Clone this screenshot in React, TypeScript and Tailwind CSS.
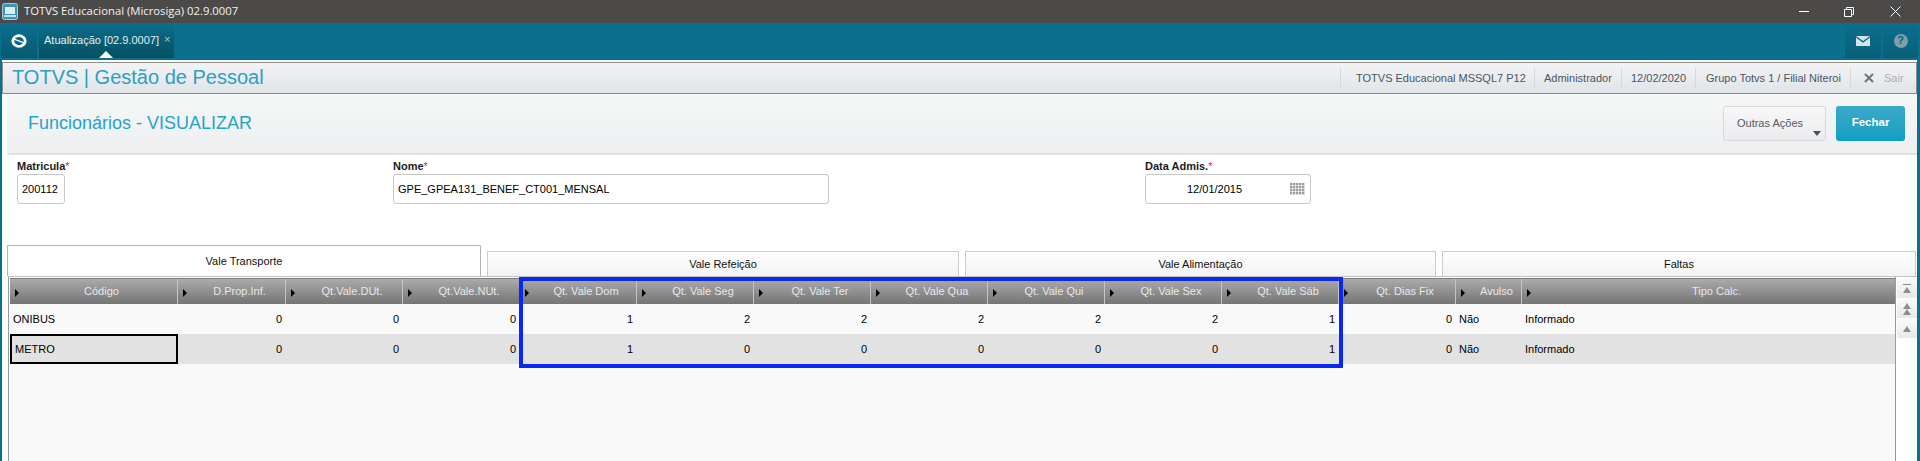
const columns = [
  { label: "Código", width: "w-[168px]" },
  { label: "D.Prop.Inf.", width: "w-[108px]" },
  { label: "Qt.Vale.DUt.", width: "w-[117px]" },
  { label: "Qt.Vale.NUt.", width: "w-[117px]" },
  { label: "Qt. Vale Dom", width: "w-[117px]" },
  { label: "Qt. Vale Seg", width: "w-[117px]" },
  { label: "Qt. Vale Ter", width: "w-[117px]" },
  { label: "Qt. Vale Qua", width: "w-[117px]" },
  { label: "Qt. Vale Qui", width: "w-[117px]" },
  { label: "Qt. Vale Sex", width: "w-[117px]" },
  { label: "Qt. Vale Sáb", width: "w-[117px]" },
  { label: "Qt. Dias Fix", width: "w-[117px]" },
  { label: "Avulso", width: "w-[66px]" },
  { label: "Tipo Calc.", width: "flex-1" },
];

const rows = [
  { name: "ONIBUS", values: [0, 0, 0, 1, 2, 2, 2, 2, 2, 1, 0], bg: "bg-[#f9f9f9]", selected: false },
  { name: "METRO", values: [0, 0, 0, 1, 0, 0, 0, 0, 0, 1, 0], bg: "bg-[#e2e2e2]", selected: true },
];

function UpArrow() {
  return <div className="h-0 w-0 border-x-[4px] border-b-[6px] border-x-transparent border-b-[#8e8e8e]" />;
}

function TitleBar() {
  return (
    <div className="flex h-[23px] items-center bg-[#4c4a48] text-[#f1f1f1]">
      <svg viewBox="0 0 16 17" className="ml-[2px] h-[17px] w-[16px]">
        <rect x="0.5" y="0.5" width="15" height="16" rx="2" fill="#3a96b8" stroke="#a5ccdb" />
        <rect x="3" y="4" width="10" height="7" fill="#dcebf1" />
        <rect x="2" y="12" width="12" height="2" fill="#c3dbe5" />
      </svg>
      <span className="ml-[6px] font-['Open_Sans',sans-serif] text-[11.3px]">TOTVS Educacional (Microsiga) 02.9.0007</span>
      <div className="ml-auto flex items-center">
        <div className="h-px w-[10px] bg-white" />
        <svg viewBox="0 0 10 10" className="ml-[35px] h-[10px] w-[10px]" fill="none" stroke="white">
          <path d="M2.5 2.5V.5h7v7h-2M.5 2.5h7v7h-7z" />
        </svg>
        <svg viewBox="0 0 11 11" className="ml-[36px] mr-[19px] h-[11px] w-[11px]" fill="none" stroke="white">
          <path d="M.5.5l10 10M10.5.5l-10 10" />
        </svg>
      </div>
    </div>
  );
}

function TabBar() {
  return (
    <div className="flex h-[37px] items-start bg-[#0b6f8e] pl-px">
      <div className="flex h-[35px] w-[36px] items-center justify-center bg-gradient-to-b from-[#0b6f8e] to-[#075a72]">
        <svg viewBox="0 0 16 14" className="h-[14px] w-[16px]" fill="none">
          <ellipse cx="8" cy="7" rx="6.2" ry="5.4" stroke="white" strokeWidth="2.8" />
          <path d="M3 5.2 13 8.8" stroke="white" strokeWidth="1.4" />
        </svg>
      </div>
      <div className="relative ml-[2px] flex h-[35px] w-[135px] items-center bg-gradient-to-b from-[#0b6f8e] to-[#04505f] pb-[1px] pl-[5px] text-[11px] text-[#e6eef1]">
        Atualização [02.9.0007]
        <span className="ml-[5px] -translate-y-[1px] text-[11px] text-[#b3ccd5]">×</span>
        <div className="absolute bottom-0 left-[60px] h-0 w-0 border-x-[7px] border-b-[7px] border-x-transparent border-b-white" />
      </div>
      <div className="ml-auto flex h-[35px] gap-[2px]">
        <div className="flex w-[36px] items-center justify-center bg-gradient-to-b from-[#0b6f8e] to-[#0a5f78]">
          <svg viewBox="0 0 14 10" className="h-[10px] w-[14px]" fill="#d6e4ea">
            <path d="M0 0h14L7 5ZM0 1.6 7 6.8l7-5.2V10H0Z" />
          </svg>
        </div>
        <div className="mr-[2px] flex w-[35px] items-center justify-center bg-gradient-to-b from-[#0b6f8e] to-[#0a5f78]">
          <div className="flex h-[14px] w-[14px] items-center justify-center rounded-full bg-[#7e9eaa] text-[11px] font-bold text-[#0a5f78]">
            ?
          </div>
        </div>
      </div>
    </div>
  );
}

function PageHeader() {
  return (
    <div className="mt-[2px] flex h-[32px] items-center border border-[#8c8c8c] bg-gradient-to-b from-[#f2f3f5] to-[#e1e4e8]">
      <span className="ml-[9px] -translate-y-[1px] text-[20px] text-[#2b9fc4]">TOTVS | Gestão de Pessoal</span>
      <div className="ml-auto flex h-[20px] items-center text-[11px] text-[#4a5560]">
        <div className="flex h-full w-[194px] items-center border-l border-[#d5d8dc] pl-[15px]">TOTVS Educacional MSSQL7 P12</div>
        <div className="flex h-full w-[87px] items-center border-l border-[#d5d8dc] pl-[9px]">Administrador</div>
        <div className="flex h-full w-[74px] items-center border-l border-[#d5d8dc] pl-[9px]">12/02/2020</div>
        <div className="flex h-full w-[155px] items-center border-l border-[#d5d8dc] pl-[10px]">Grupo Totvs 1 / Filial Niteroi</div>
        <div className="flex h-full w-[66px] items-center border-l border-[#d5d8dc] pl-[13px] text-[#a9b0b6]">
          <svg viewBox="0 0 10 10" className="h-[10px] w-[10px]" fill="none" stroke="#6f7478" strokeWidth="2">
            <path d="M1 1l8 8M9 1 1 9" />
          </svg>
          <span className="ml-[10px]">Sair</span>
        </div>
      </div>
    </div>
  );
}

function ActionBar() {
  return (
    <div className="ml-[5px] flex h-[61px] items-start border-b-2 border-[#e1e2e4] bg-gradient-to-b from-[#f5f6f6] to-[#eeeff1]">
      <span className="ml-[21px] mt-[19px] text-[18px] leading-[21px] text-[#1ea5c9]">Funcionários - VISUALIZAR</span>
      <div className="ml-auto mr-[12px] mt-[12px] flex gap-[10px]">
        <div className="relative flex h-[35px] w-[103px] items-center justify-center rounded-[3px] border border-[#d6d8da] bg-gradient-to-b from-[#f7f7f8] to-[#ebecee] pr-[9px] text-[11px] text-[#555a60]">
          Outras Ações
          <div className="absolute bottom-[4px] right-[4px] h-0 w-0 border-x-[4px] border-t-[5px] border-x-transparent border-t-[#4b5058]" />
        </div>
        <div className="flex h-[35px] w-[69px] items-center justify-center rounded-[3px] bg-gradient-to-b from-[#3aa9c9] to-[#0f9fc2] pb-[1px] text-[11.5px] font-bold text-white">
          Fechar
        </div>
      </div>
    </div>
  );
}

function Field({ label, width, box, children }: { label: string; width: string; box: string; children: React.ReactNode }) {
  return (
    <div className={width}>
      <div className="h-[19px] pt-[5px] text-[11px] font-bold leading-[13px] text-[#1b1b1b]">
        {label}
        <span className="font-normal text-[#f0142d]">*</span>
      </div>
      <div className={`${box} flex h-[30px] items-center rounded-[3px] border border-[#c8c8c8] bg-white text-[11px] text-black`}>
        {children}
      </div>
    </div>
  );
}

function FormRow() {
  return (
    <div className="flex h-[90px] pl-[15px]">
      <Field label="Matricula" width="w-[376px]" box="w-[48px] pl-[4px]">200112</Field>
      <Field label="Nome" width="w-[752px]" box="w-[436px] pl-[4px]">GPE_GPEA131_BENEF_CT001_MENSAL</Field>
      <Field label="Data Admis." width="w-[166px]" box="w-[166px] pl-[41px]">
        12/01/2015
        <svg viewBox="0 0 15 12" className="ml-[48px] h-[12px] w-[15px]" fill="#9a9ea4">
          {[0, 3, 6, 9].map((y) =>
            [0, 3, 6, 9, 12].map((x) => <rect key={`${x}-${y}`} x={x} y={y} width="2.4" height="2.4" />)
          )}
        </svg>
      </Field>
    </div>
  );
}

function Tabs() {
  const inactive =
    "flex h-[25px] items-center justify-center border border-b-0 border-[#cccccc] bg-gradient-to-b from-white to-[#f3f3f3] text-[11px] text-[#111]";
  return (
    <div className="flex h-[31px] items-end pl-[5px]">
      <div className="flex h-[31px] w-[474px] items-center justify-center border border-b-0 border-[#b4b4b4] bg-white text-[11px] text-[#111]">
        Vale Transporte
      </div>
      <div className={`${inactive} ml-[6px] w-[472px]`}>Vale Refeição</div>
      <div className={`${inactive} ml-[6px] w-[471px]`}>Vale Alimentação</div>
      <div className={`${inactive} ml-[6px] w-[474px]`}>Faltas</div>
    </div>
  );
}

function ScrollButtons() {
  return (
    <div className="ml-px flex w-[20px] flex-col gap-[1px] pt-px">
      <div className="flex h-[20px] flex-col items-center justify-center gap-[2px] bg-gradient-to-b from-[#fafafa] to-[#e9e9e9]">
        <div className="h-px w-[8px] bg-[#8e8e8e]" />
        <UpArrow />
      </div>
      <div className="flex h-[19px] flex-col items-center justify-center bg-gradient-to-b from-[#fafafa] to-[#e9e9e9]">
        <UpArrow />
        <UpArrow />
      </div>
      <div className="flex h-[19px] items-center justify-center bg-gradient-to-b from-[#fafafa] to-[#e9e9e9]">
        <UpArrow />
      </div>
    </div>
  );
}

function DataGrid() {
  return (
    <div className="relative ml-[6px] flex min-h-0 flex-1 border-t border-[#c4c4c4]">
      <div className="flex min-w-0 flex-1 flex-col border-x border-[#9a9a9a] bg-[#f9f9f9] pl-px">
        <div className="mt-[1px] flex h-[26px] border-t border-[#7d7d7d] bg-gradient-to-b from-[#ababab] to-[#757575]">
          {columns.map((col) => (
            <div key={col.label} className={`${col.width} relative flex items-center justify-center border-r border-[#c4c4c4] pl-[16px] text-[11px] text-[#e8e8e8] last:border-r-0`}>
              <div className="absolute left-[5px] top-[10px] h-0 w-0 border-y-[4px] border-l-[4px] border-y-transparent border-l-black" />
              {col.label}
            </div>
          ))}
        </div>
        {rows.map((row) => (
          <div key={row.name} className={`flex h-[30px] items-center text-[11px] text-black ${row.bg}`}>
            <div className={`flex h-full w-[168px] items-center ${row.selected ? "border-2 border-black pl-[3px]" : "pl-[3px]"}`}>{row.name}</div>
            {row.values.map((v, i) => (
              <div key={i} className={`${columns[i + 1].width} pr-[4px] text-right`}>{v}</div>
            ))}
            <div className="w-[66px] pl-[3px]">Não</div>
            <div className="flex-1 pl-[3px]">Informado</div>
          </div>
        ))}
      </div>
      <ScrollButtons />
      {/* Blue highlight drawn over the grid */}
      <div className="absolute left-[511px] top-0 h-[91px] w-[824px] border-4 border-[#0a28f5]" />
    </div>
  );
}

export default function App() {
  return (
    <div className="flex h-[461px] w-[1920px] flex-col overflow-hidden bg-white font-['Liberation_Sans',sans-serif]">
      <TitleBar />
      <TabBar />
      <div className="flex min-h-0 flex-1 flex-col border-x-[3px] border-l-2 border-[#0b6f8e] bg-white">
        <PageHeader />
        <ActionBar />
        <FormRow />
        <Tabs />
        <DataGrid />
      </div>
    </div>
  );
}
